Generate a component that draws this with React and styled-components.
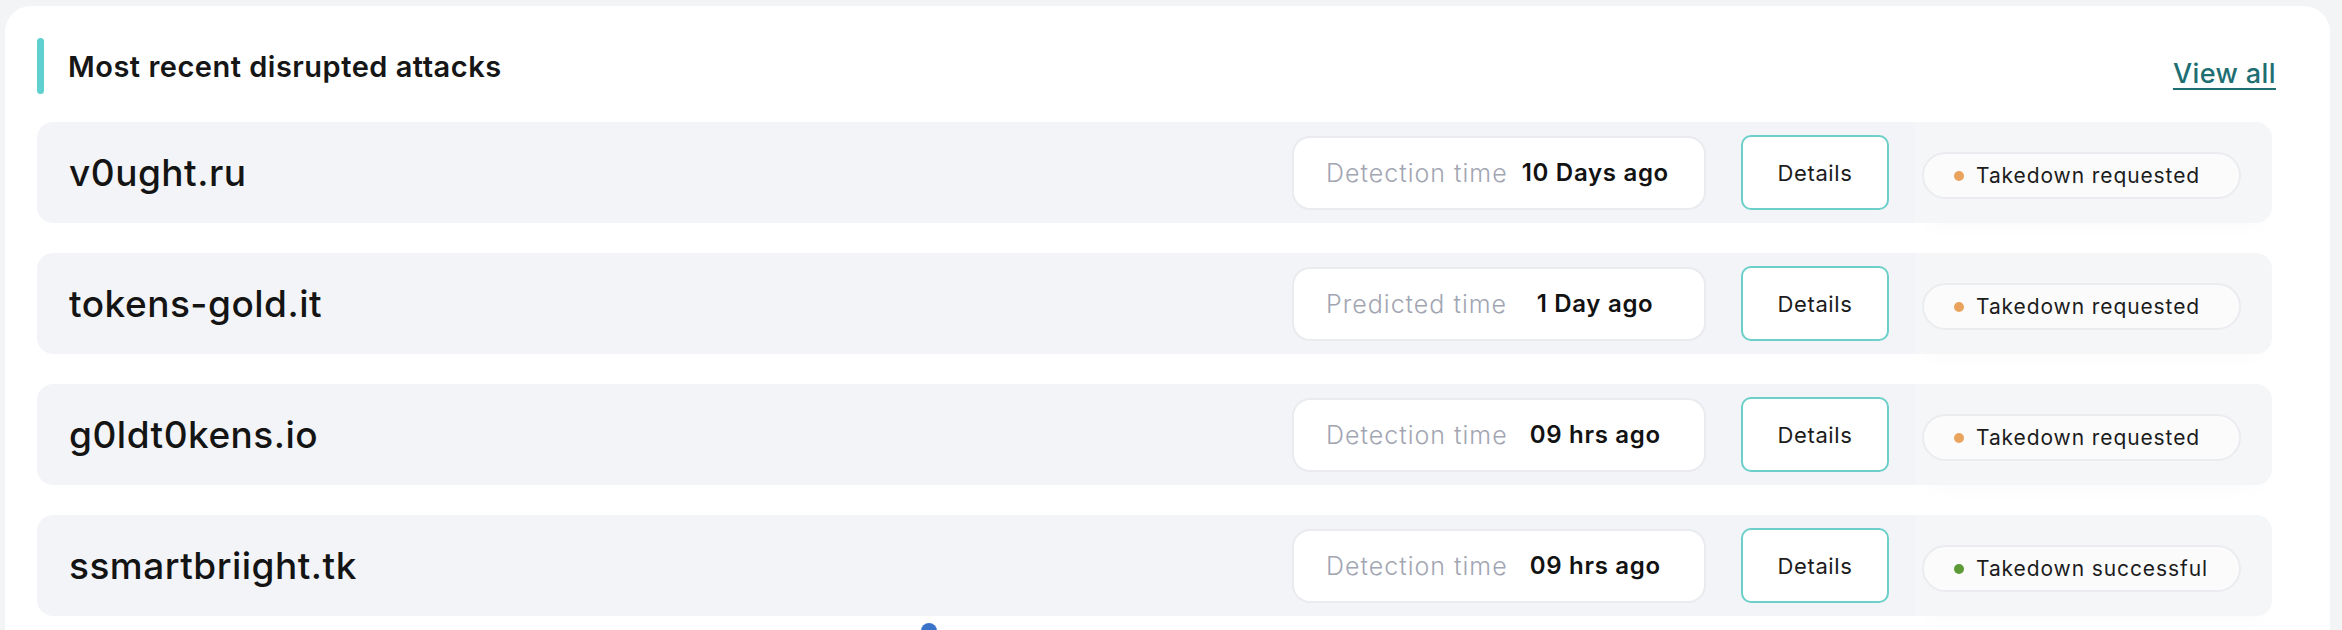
import React from 'react';
import styled, { createGlobalStyle } from 'styled-components';

const GlobalStyle = createGlobalStyle`
  html, body {
    margin: 0;
    padding: 0;
    background: #f3f4f6;
    font-family: Inter, "Noto Sans", "Liberation Sans", sans-serif;
    overflow: hidden;
  }
`;

const Page = styled.div`
  padding: 6px 12px 0 5px;
`;

const Card = styled.section`
  position: relative;
  background: #ffffff;
  border-radius: 26px 26px 0 0;
  padding: 32px 58px 60px 32px;
  min-height: 640px;
  box-sizing: border-box;
`;

const Header = styled.div`
  display: flex;
  align-items: center;
  justify-content: space-between;
  height: 56px;
  margin-bottom: 28px;
`;

const TitleWrap = styled.div`
  display: flex;
  align-items: center;
  gap: 24px;
  height: 100%;
`;

const Accent = styled.span`
  width: 7px;
  height: 56px;
  border-radius: 4px;
  background: #5fcfcf;
`;

const Title = styled.h2`
  margin: 0;
  font-size: 29px;
  font-weight: 600;
  color: #161616;
  letter-spacing: 0.5px;
`;

const ViewAll = styled.a`
  margin-top: 14px;
  margin-right: -4px;
  font-size: 27px;
  font-weight: 500;
  color: #1e6e72;
  letter-spacing: 0.4px;
  text-decoration: underline;
  text-underline-offset: 5px;
  text-decoration-thickness: 2px;
  cursor: pointer;
`;

const List = styled.div`
  display: flex;
  flex-direction: column;
  gap: 30px;
`;

const Row = styled.div`
  display: flex;
  align-items: center;
  height: 101px;
  background: #f3f4f7;
  border-radius: 16px;
  padding-left: 32px;
`;

const Domain = styled.div`
  flex: 1;
  font-size: 37px;
  font-weight: 500;
  color: #141414;
  letter-spacing: 0.5px;
`;

const TimePill = styled.div`
  display: flex;
  align-items: center;
  box-sizing: border-box;
  width: 414px;
  height: 74px;
  padding: 0 30px 0 32px;
  background: #ffffff;
  border: 2px solid #eaebee;
  border-radius: 18px;
  font-size: 24px;
`;

const TimeLabel = styled.span`
  color: #a2a5b2;
  font-weight: 300;
  font-size: 25px;
  letter-spacing: 1px;
  white-space: nowrap;
`;

const TimeValue = styled.span`
  flex: 1;
  margin-left: 9px;
  text-align: center;
  font-weight: 600;
  color: #121212;
  letter-spacing: 0.7px;
  white-space: nowrap;
`;

const DetailsButton = styled.button`
  box-sizing: border-box;
  width: 148px;
  height: 75px;
  margin-left: 35px;
  background: #ffffff;
  border: 2px solid #6ccfca;
  border-radius: 10px;
  font-family: inherit;
  font-size: 22px;
  font-weight: 400;
  letter-spacing: 0.6px;
  color: #1c1c1c;
  cursor: pointer;
`;

const StatusCell = styled.div`
  align-self: stretch;
  display: flex;
  align-items: center;
  margin-left: 26px;
  padding: 6px 31px 0 7px;
  border-radius: 0 16px 16px 0;
  background: rgba(255, 255, 255, 0.2);
  box-shadow: 0 14px 22px -12px rgba(0, 0, 0, 0.025);
`;

const StatusPill = styled.div`
  display: flex;
  align-items: center;
  gap: 12px;
  box-sizing: border-box;
  width: 319px;
  height: 47px;
  padding: 0 30px;
  background: #fbfbfc;
  border: 2px solid #ebecef;
  border-radius: 999px;
  font-size: 21px;
  color: #1c1c1c;
  letter-spacing: 0.9px;
  white-space: nowrap;
`;

const Dot = styled.span`
  flex: none;
  width: 10px;
  height: 10px;
  border-radius: 50%;
  background: ${(p) => (p.$tone === 'success' ? '#5c9a35' : '#e9a35d')};
`;

const ChartPoint = styled.span`
  position: absolute;
  left: 916px;
  top: 617px;
  width: 16px;
  height: 16px;
  border-radius: 50%;
  background: #3a74c9;
`;

const attacks = [
  { domain: 'v0ught.ru', label: 'Detection time', time: '10 Days ago', status: 'Takedown requested', tone: 'pending' },
  { domain: 'tokens-gold.it', label: 'Predicted time', time: '1 Day ago', status: 'Takedown requested', tone: 'pending' },
  { domain: 'g0ldt0kens.io', label: 'Detection time', time: '09 hrs ago', status: 'Takedown requested', tone: 'pending' },
  { domain: 'ssmartbriight.tk', label: 'Detection time', time: '09 hrs ago', status: 'Takedown successful', tone: 'success' },
];

const App = () => {
  return (
    <>
      <GlobalStyle />
      <Page>
        <Card>
          <Header>
            <TitleWrap>
              <Accent />
              <Title>Most recent disrupted attacks</Title>
            </TitleWrap>
            <ViewAll>View all</ViewAll>
          </Header>
          <List>
            {attacks.map((a) => (
              <Row key={a.domain}>
                <Domain>{a.domain}</Domain>
                <TimePill>
                  <TimeLabel>{a.label}</TimeLabel>
                  <TimeValue>{a.time}</TimeValue>
                </TimePill>
                <DetailsButton>Details</DetailsButton>
                <StatusCell>
                  <StatusPill>
                    <Dot $tone={a.tone} />
                    {a.status}
                  </StatusPill>
                </StatusCell>
              </Row>
            ))}
          </List>
          <ChartPoint />
        </Card>
      </Page>
    </>
  );
};

export default App;
